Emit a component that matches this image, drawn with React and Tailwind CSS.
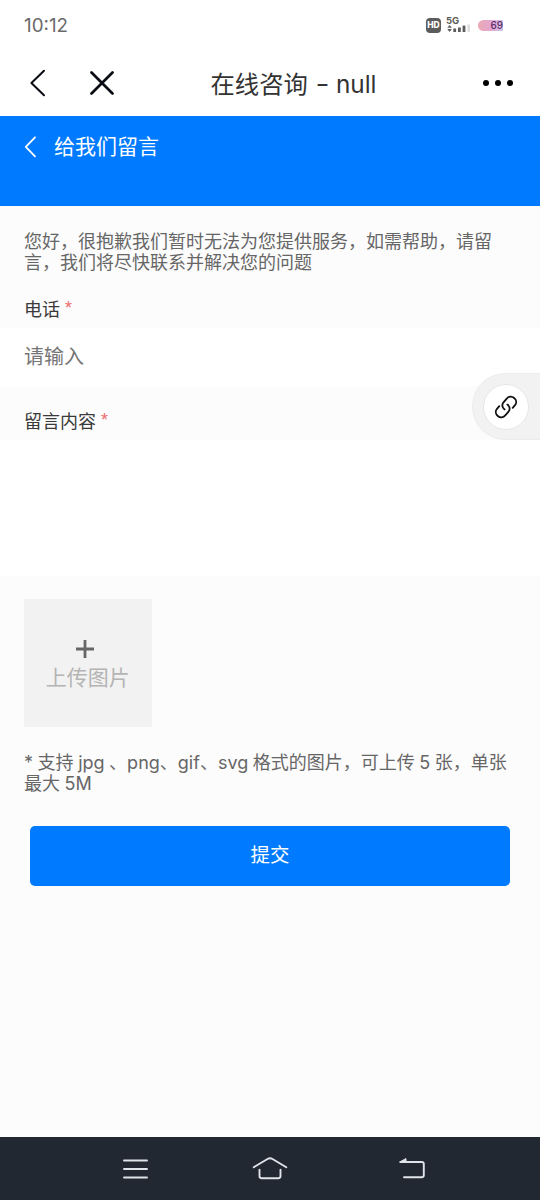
import React, { useState } from 'react';

const HdIcon = () => (
    <div className="w-[15px] h-[15px] rounded-[4px] bg-[#5c5c5c] text-white text-[8.5px] leading-[15px] font-extrabold text-center">HD</div>
);

const SignalIcon = () => (
    <div className="relative w-6 h-[16px] text-[#5c5c5c]">
        <span className="absolute -left-px top-0 text-[9.5px] leading-[7px] font-bold">5G</span>
        <svg className="absolute left-0 top-0" width="24" height="16" viewBox="0 0 24 16" fill="currentColor">
            <path d="M0.3 10.8 L2.6 8 L4.9 10.8 Z M0.3 12 L2.6 15 L4.9 12 Z" />
            <rect x="6.3" y="11.5" width="2.8" height="3.5" />
            <rect x="11" y="10.5" width="2.8" height="4.5" />
            <rect x="15.6" y="8.6" width="2.8" height="6.4" />
            <rect x="20.4" y="7.5" width="2.6" height="7.5" fill="#dedede" />
        </svg>
    </div>
);

const Battery = ({ level }) => (
    <div className="w-[25px] h-[11px] rounded-l-full rounded-r-[2px] bg-linear-to-r from-[#eda9b4] via-[#e3a6cf] to-[#cfc4ee] text-[#5f2c66] text-[10px] leading-[11px] font-medium text-right">
        {level}
    </div>
);

const StatusBar = () => (
    <div className="h-[50px] flex items-center justify-between pl-6 pr-[37px] bg-white">
        <span className="text-[18.8px] text-[#6a6a6a] pt-[3px]">10:12</span>
        <div className="flex items-center">
            <HdIcon />
            <div className="ml-[6px] mr-[7px]"><SignalIcon /></div>
            <Battery level={69} />
        </div>
    </div>
);

const TitleBar = () => (
    <div className="h-[66px] flex items-center justify-between pl-[29px] pr-[27px] bg-white">
        <div className="w-[91px] flex items-center">
            <svg width="18" height="28" viewBox="0 0 18 28" fill="none" stroke="#0b0d14" strokeWidth="2" strokeLinecap="round" strokeLinejoin="round">
                <path d="M15 1.8 L2.4 14 L15 26.2" />
            </svg>
            <svg className="ml-[43px]" width="24" height="24" viewBox="0 0 24 24" fill="none" stroke="#0b0d14" strokeWidth="2.7" strokeLinecap="round">
                <path d="M1.5 1.5 L22.5 22.5 M22.5 1.5 L1.5 22.5" />
            </svg>
        </div>
        <h1 className="flex-1 pl-[2px] pt-px text-center text-[24.3px] leading-9 text-[#333333] whitespace-nowrap">
            在线咨询<span className="inline-block ml-[9px] mr-2 scale-x-125">-</span>null
        </h1>
        <div className="w-[48px] flex justify-end gap-[6px]">
            <i className="size-[6px] rounded-full bg-black" />
            <i className="size-[6px] rounded-full bg-black" />
            <i className="size-[6px] rounded-full bg-black" />
        </div>
    </div>
);

const Label = ({ children }) => (
    <label className="block px-6 text-[18px] leading-6 text-[#3a3a3a]">
        {children} <span className="inline-block -translate-y-0.5 font-['Liberation_Sans'] text-[#ef6b6b]">*</span>
    </label>
);

const FloatLink = () => (
    <div className="absolute right-0 top-[373px] w-[68px] h-[67px] rounded-l-full bg-[#f2f2f2] border border-r-0 border-[#ececec] flex items-center pl-[10px]">
        <div className="size-[46px] rounded-full bg-white border border-[#e6e6e6] flex items-center justify-center">
            <svg width="24" height="24" viewBox="0 0 24 24" fill="none" stroke="#111111" strokeWidth="1.8" strokeLinecap="round">
                <path d="M10.6 14.4 C8 12.6 7.7 9.6 9.5 7.3 L12.5 3.8 C14.6 1.3 17.8 1 20.2 3 C22.6 5 22.8 8 21 10.2 L18.7 12.8" />
                <path d="M13.4 9.6 C16 11.4 16.3 14.4 14.5 16.7 L11.5 20.2 C9.4 22.7 6.2 23 3.8 21 C1.4 19 1.2 16 3 13.8 L5.3 11.2" />
            </svg>
        </div>
    </div>
);

const SystemNav = () => (
    <div className="h-[63px] shrink-0 flex items-center pl-[116px] bg-[#222831]">
        <svg width="36" height="26" viewBox="0 0 36 26" fill="none" stroke="#dfe3ea" strokeWidth="1.9" strokeLinecap="round">
            <path d="M8 4.5 H31 M8 13 H31 M8 21.5 H31" />
        </svg>
        <svg className="ml-[99px]" width="38" height="26" viewBox="0 0 38 26" fill="none" stroke="#dfe3ea" strokeWidth="1.9" strokeLinecap="round" strokeLinejoin="round">
            <path d="M2.7 11.2 L16.5 3 Q19 1.6 21.5 3 L35.3 11.2" />
            <path d="M8.5 13.8 V20 Q8.5 22.2 10.7 22.2 H27.3 Q29.5 22.2 29.5 20 V13.8" />
        </svg>
        <svg className="ml-[108px]" width="30" height="26" viewBox="0 0 30 26" fill="none" stroke="#dfe3ea" strokeWidth="1.9" strokeLinecap="round" strokeLinejoin="round">
            <path d="M3.5 6 H24.8 Q26.8 6 26.8 8 V19 Q26.8 21.2 24.8 21.2 H7" />
            <path d="M3 5.8 L9 2.6 V5.8 Z" fill="#dfe3ea" strokeWidth="1" />
        </svg>
    </div>
);

const App = () => {
    const [phone, setPhone] = useState('');
    const [content, setContent] = useState('');

    return (
        <div className="relative w-[540px] h-[1200px] flex flex-col overflow-hidden bg-[#fcfcfc] font-[Inter,'Noto_Sans_CJK_SC',sans-serif]">
            <StatusBar />
            <TitleBar />

            {/* 页面标题 */}
            <header className="h-[90px] flex items-start pl-6 pt-[15px] bg-[#007aff] text-white">
                <svg className="mt-[5px]" width="14" height="22" viewBox="0 0 14 22" fill="none" stroke="white" strokeWidth="1.8" strokeLinecap="round" strokeLinejoin="round">
                    <path d="M11 1.3 L1.8 10.8 L11 20.3" />
                </svg>
                <h2 className="ml-4 text-[21px] leading-8">给我们留言</h2>
            </header>

            {/* 留言表单 */}
            <main className="flex-1">
                <p className="px-6 pt-[25px] text-[18px] leading-[21px] text-[#666666] whitespace-nowrap">
                    您好，很抱歉我们暂时无法为您提供服务，如需帮助，请留<br />言，我们将尽快联系并解决您的问题
                </p>

                <div className="pt-[25px]">
                    <Label>电话</Label>
                    <input
                        value={phone}
                        onChange={(e) => setPhone(e.target.value)}
                        placeholder="请输入"
                        className="block mt-[6px] w-full h-[58px] px-6 bg-white text-[20px] outline-none placeholder:text-[#757575]"
                    />
                </div>

                <div className="pt-6">
                    <Label>留言内容</Label>
                    <textarea
                        value={content}
                        onChange={(e) => setContent(e.target.value)}
                        className="block mt-[6px] w-full h-[136px] px-6 py-3 bg-white text-[20px] outline-none resize-none"
                    />
                </div>

                <button className="mt-[23px] ml-6 size-[127.5px] flex flex-col items-center pt-[41px] bg-[#f2f2f2]">
                    <svg className="mr-[6px]" width="18" height="18" viewBox="0 0 18 18" stroke="#666666" strokeWidth="2.8">
                        <path d="M0 9 H18 M9 0 V18" />
                    </svg>
                    <span className="mt-[6px] text-[21px] leading-7 text-[#b4b4b4]">上传图片</span>
                </button>

                <p className="px-6 pt-[25px] text-[18px] leading-[21px] text-[#666666] whitespace-nowrap [word-spacing:-0.5px]">
                    * 支持 jpg 、png、gif、svg 格式的图片，可上传 5 张，单张<br />最大 5M
                </p>

                <button className="block mt-8 mx-[30px] w-[480px] h-[60px] rounded-[5px] bg-[#007aff] text-white text-[19.5px]">
                    提交
                </button>
            </main>

            <SystemNav />
            <FloatLink />
        </div>
    );
};

export default App;
